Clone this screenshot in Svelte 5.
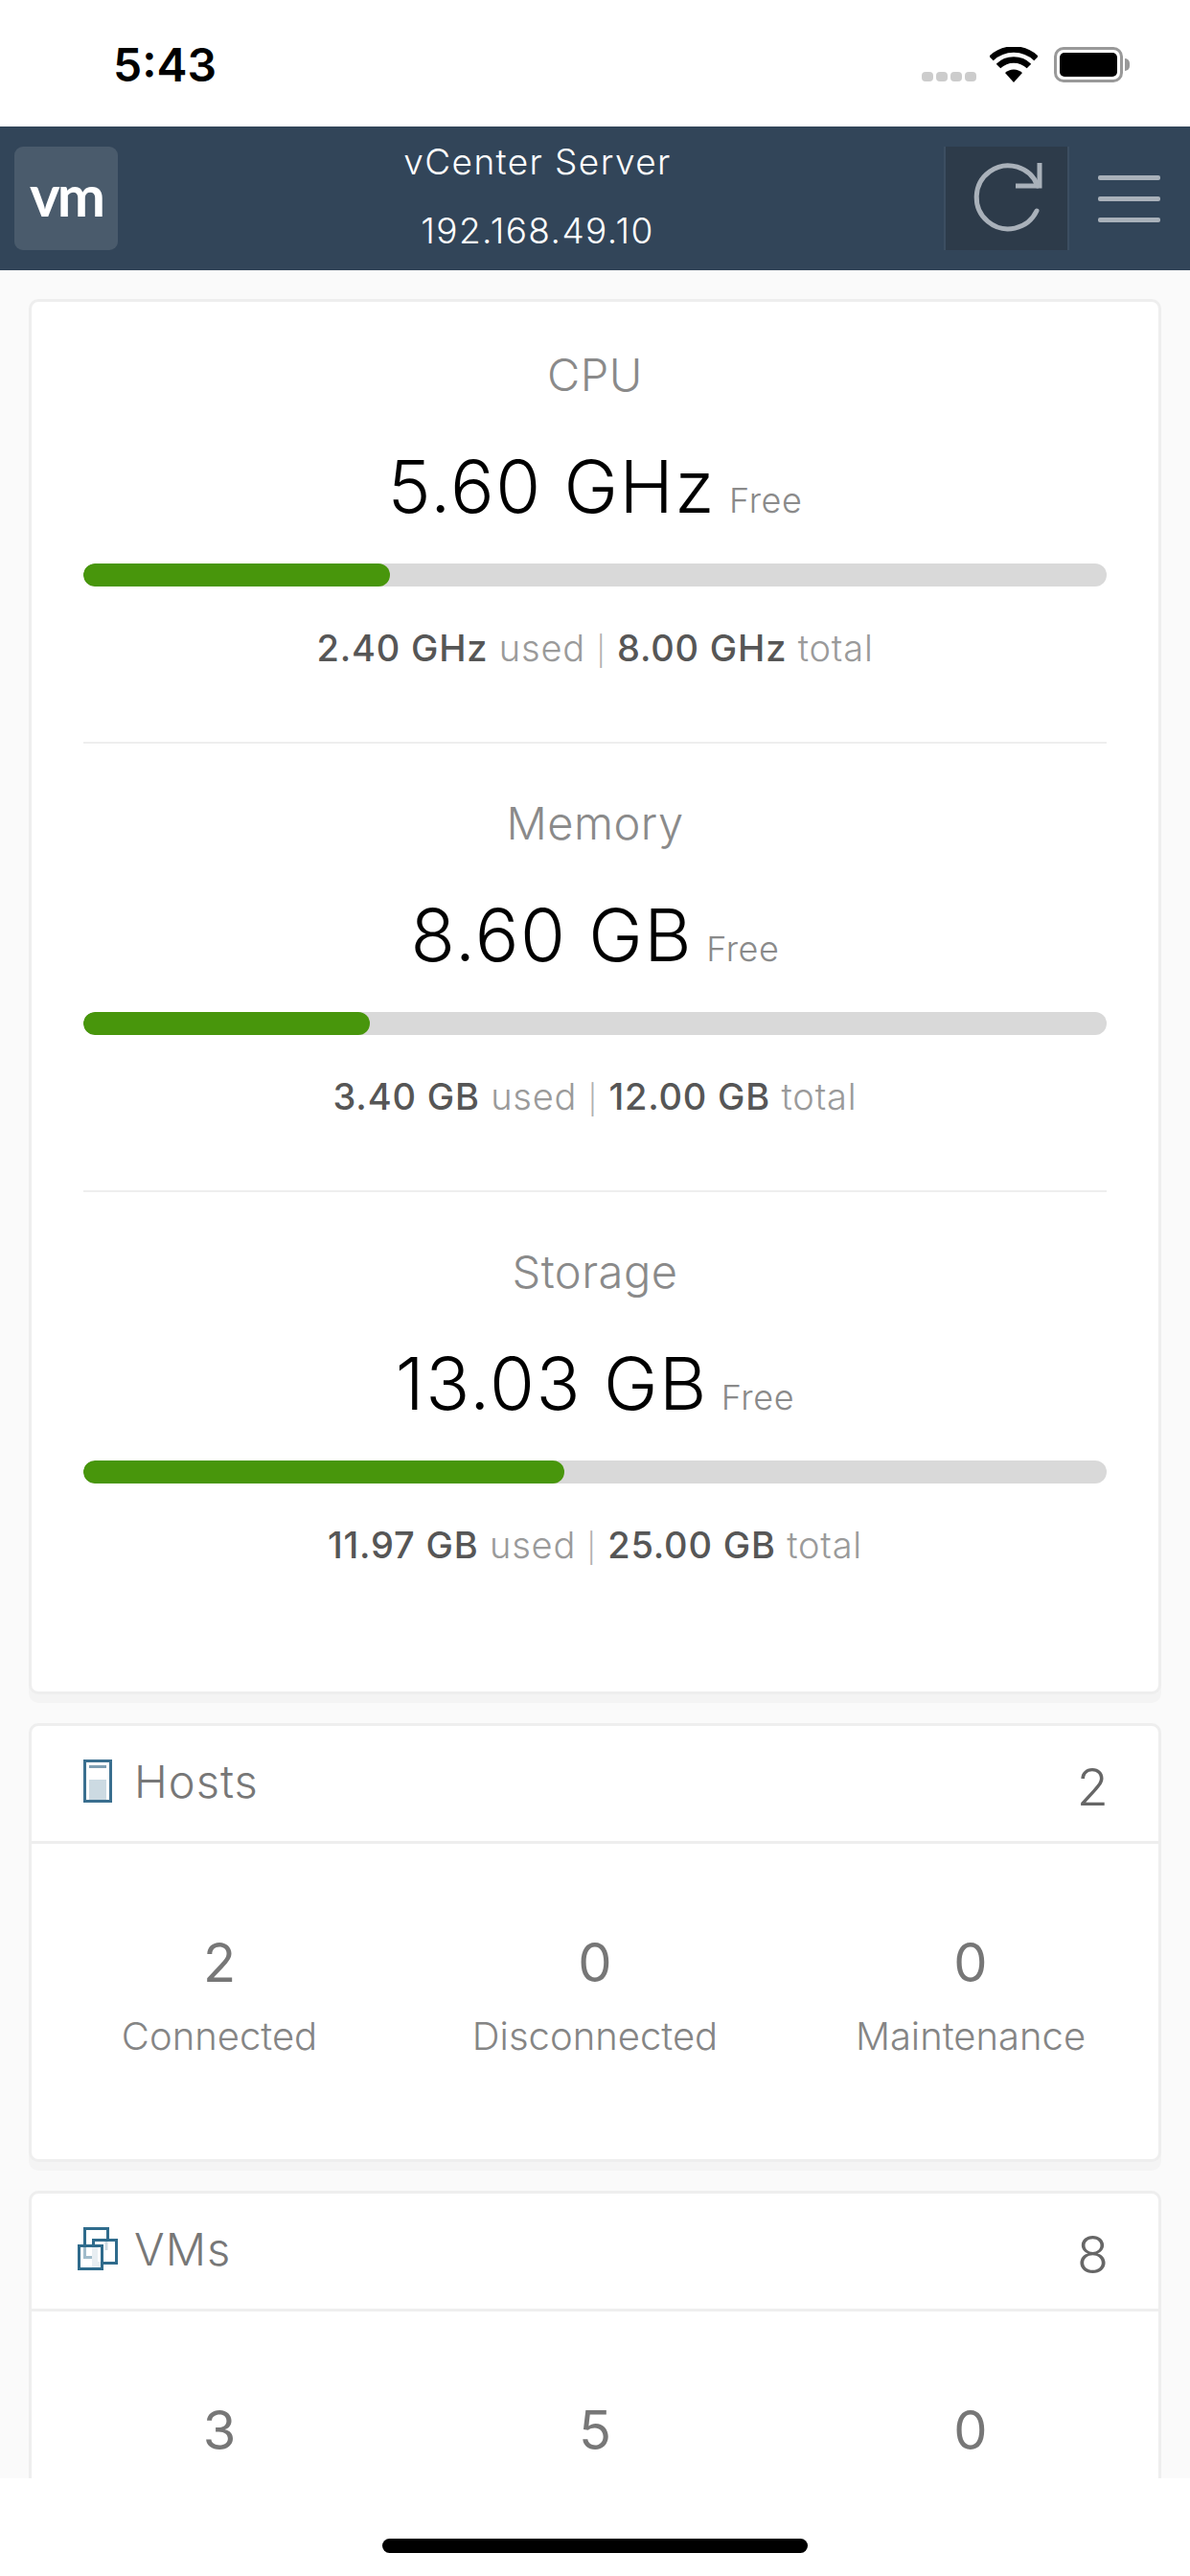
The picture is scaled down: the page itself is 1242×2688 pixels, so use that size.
<script>
    const meters = [
        { name: "CPU", free: "5.60 GHz", used: "2.40 GHz", total: "8.00 GHz", pct: 30 },
        { name: "Memory", free: "8.60 GB", used: "3.40 GB", total: "12.00 GB", pct: 28 },
        { name: "Storage", free: "13.03 GB", used: "11.97 GB", total: "25.00 GB", pct: 47 }
    ];

    const panels = [
        {
            kind: "hosts",
            title: "Hosts",
            count: 2,
            stats: [
                { value: 2, label: "Connected" },
                { value: 0, label: "Disconnected" },
                { value: 0, label: "Maintenance" }
            ]
        },
        {
            kind: "vms",
            title: "VMs",
            count: 8,
            // labels of this row are below the fold
            stats: [{ value: 3 }, { value: 5 }, { value: 0 }]
        }
    ];
</script>

<div class="phone">
    <div class="status">
        <span class="time">5:43</span>
        <div class="status-icons">
            <div class="dots"><i></i><i></i><i></i><i></i></div>
            <svg class="wifi" width="50" height="37" viewBox="0 0 50 37">
                <path d="M25 37 L16 27 A13 13 0 0 1 34 27 Z" fill="#000" />
                <path d="M9 20 A23 23 0 0 1 41 20" fill="none" stroke="#000" stroke-width="6.5" />
                <path d="M1.5 12 A34 34 0 0 1 48.5 12" fill="none" stroke="#000" stroke-width="6.5" />
            </svg>
            <div class="battery"><div class="charge"></div></div>
            <div class="nub"></div>
        </div>
    </div>

    <header class="topbar">
        <div class="logo">vm</div>
        <div class="title">
            <div>vCenter Server</div>
            <div>192.168.49.10</div>
        </div>
        <div class="refresh">
            <svg width="127" height="108" viewBox="0 0 127 108">
                <path d="M95 67 A33 33 0 1 1 96 41" fill="none" stroke="#a9b1ba" stroke-width="5" stroke-linecap="round" />
                <path d="M98 17 V41 H73" fill="none" stroke="#a9b1ba" stroke-width="5" />
            </svg>
        </div>
        <div class="menu"><i></i><i></i><i></i></div>
    </header>

    <main class="content">
        <section class="card usage">
            {#each meters as m}
                <div class="meter">
                    <div class="meter-name">{m.name}</div>
                    <div class="meter-free"><span>{m.free}</span><small>Free</small></div>
                    <div class="track"><div class="fill" style="width: {m.pct}%"></div></div>
                    <div class="meter-stats">
                        <b>{m.used}</b> used <span class="sep">|</span> <b>{m.total}</b> total
                    </div>
                </div>
            {/each}
        </section>

        {#each panels as p}
            <section class="card">
                <div class="card-head">
                    {#if p.kind === "hosts"}
                        <svg class="icon" width="42" height="45" viewBox="0 0 42 45">
                            <rect x="7.5" y="1.5" width="27" height="42" fill="#fff" stroke="#3a6f8f" stroke-width="3" />
                            <rect x="12" y="6" width="18" height="3" fill="#7f9fb3" />
                            <rect x="12" y="21" width="18" height="21" fill="#ccdae2" />
                        </svg>
                    {:else}
                        <svg class="icon" width="42" height="45" viewBox="0 0 42 45">
                            <rect x="7.5" y="1.5" width="24" height="30" fill="#fff" stroke="#2f6b8c" stroke-width="3" />
                            <rect x="16.5" y="13.5" width="24" height="24" fill="#fff" stroke="#2f6b8c" stroke-width="3" />
                            <path d="M30 15 V24" stroke="#ccdae2" stroke-width="3" fill="none" />
                            <path d="M18 21 V39 H24" stroke="#ccdae2" stroke-width="6" fill="none" />
                            <rect x="1.5" y="19.5" width="24" height="24" fill="#fff" fill-opacity="0.55" stroke="#2f6b8c" stroke-width="3" />
                        </svg>
                    {/if}
                    <span class="card-title">{p.title}</span>
                    <span class="card-count">{p.count}</span>
                </div>
                <div class="card-body">
                    {#each p.stats as s}
                        <div class="stat">
                            <div class="stat-value">{s.value}</div>
                            {#if s.label}
                                <div class="stat-label">{s.label}</div>
                            {/if}
                        </div>
                    {/each}
                </div>
            </section>
        {/each}
    </main>

    <div class="home"><div class="home-bar"></div></div>
</div>

<style>
    :global(body) {
        margin: 0;
        background: #fff;
    }

    .phone {
        width: 1242px;
        height: 2688px;
        display: flex;
        flex-direction: column;
        overflow: hidden;
        font-family: Inter, "Liberation Sans", sans-serif;
        font-weight: 300;
    }

    .status {
        height: 132px;
        flex: none;
        background: #fff;
        display: flex;
        justify-content: space-between;
        padding: 44px 63px 0 118px;
        box-sizing: border-box;
    }

    .time {
        font-size: 48px;
        line-height: 48px;
        font-weight: 600;
        color: #000;
    }

    .status-icons {
        display: flex;
        align-items: flex-start;
        height: 40px;
        padding-top: 5px;
    }

    .dots {
        display: flex;
        gap: 3px;
        margin-top: 26px;
        margin-right: 14px;
    }

    .dots i {
        width: 12px;
        height: 10px;
        border-radius: 4px;
        background: #cccccc;
    }

    .battery {
        width: 72px;
        height: 37px;
        margin-left: 17px;
        box-sizing: border-box;
        border: 3px solid #999;
        border-radius: 10px;
        padding: 3px;
    }

    .charge {
        height: 100%;
        background: #000;
        border-radius: 5px;
    }

    .nub {
        width: 5px;
        height: 13px;
        margin: 12px 0 0 2px;
        background: #999;
        border-radius: 0 5px 5px 0;
    }

    .topbar {
        height: 150px;
        flex: none;
        background: #324559;
        display: flex;
        align-items: center;
    }

    .logo {
        width: 108px;
        height: 108px;
        margin-left: 15px;
        flex: none;
        background: #4a5b6c;
        border-radius: 9px;
        color: #fff;
        font-family: Lato, sans-serif;
        font-weight: 700;
        font-size: 60px;
        line-height: 100px;
        letter-spacing: -3px;
        text-align: center;
    }

    .title {
        flex: none;
        width: 862px;
        box-sizing: border-box;
        padding: 0 0 4px 14px;
        color: #fff;
        font-size: 37px;
        line-height: 72px;
        letter-spacing: 1.4px;
        text-align: center;
    }

    .refresh {
        width: 131px;
        height: 108px;
        flex: none;
        background: #2d3b4a;
        box-sizing: border-box;
        border-left: 2px solid #3c4e61;
        border-right: 2px solid #3c4e61;
    }

    .refresh svg {
        display: block;
    }

    .menu {
        width: 65px;
        margin-left: 30px;
        display: flex;
        flex-direction: column;
        gap: 17px;
    }

    .menu i {
        height: 5px;
        border-radius: 2px;
        background: #a9b1ba;
    }

    .content {
        flex: 1;
        min-height: 0;
        overflow: hidden;
        background: #fafafa;
        padding: 30px 30px 0;
    }

    .card {
        background: #fff;
        border: 3px solid #eee;
        border-radius: 10px;
        box-shadow: 0 9px 0 #f4f4f4;
        margin-bottom: 30px;
    }

    .usage {
        padding: 0 54px 55px;
    }

    .meter {
        padding: 53px 0 73px;
        text-align: center;
        border-bottom: 2px solid #eee;
    }

    .meter:first-child {
        padding-top: 46px;
    }

    .meter:last-child {
        border-bottom: none;
    }

    .meter-name {
        font-size: 47px;
        line-height: 60px;
        letter-spacing: 0.5px;
        color: #8a8a8a;
    }

    .meter-free {
        margin-top: 41px;
        height: 90px;
        font-size: 76px;
        line-height: 90px;
        letter-spacing: 1.5px;
        color: #000;
    }

    .meter-free small {
        margin-left: 14px;
        font-size: 36px;
        line-height: 36px;
        letter-spacing: 0.6px;
        color: #8a8a8a;
    }

    .track {
        margin-top: 36px;
        height: 24px;
        border-radius: 12px;
        background: #d9d9d9;
        overflow: hidden;
    }

    .fill {
        height: 100%;
        border-radius: 12px;
        background: #48960c;
    }

    .meter-stats {
        margin-top: 39px;
        height: 50px;
        font-size: 38px;
        line-height: 50px;
        letter-spacing: 0.8px;
        color: #9a9a9a;
    }

    .meter-stats b {
        font-weight: 500;
        color: #565656;
    }

    .sep {
        font-size: 30px;
        color: #b0b0b0;
    }

    .card-head {
        height: 123px;
        box-sizing: border-box;
        padding: 0 52px 6px 48px;
        display: flex;
        align-items: center;
        border-bottom: 3px solid #eee;
    }

    .card-title {
        margin-left: 17px;
        font-size: 47px;
        letter-spacing: 1px;
        color: #777;
    }

    .card-count {
        margin-left: auto;
        padding-top: 12px;
        font-size: 54px;
        color: #666;
    }

    .card-body {
        display: grid;
        grid-template-columns: repeat(3, 1fr);
        padding: 94px 0 103px;
    }

    .stat {
        text-align: center;
    }

    .stat-value {
        font-size: 56px;
        line-height: 60px;
        font-weight: 400;
        color: #777;
    }

    .stat-label {
        margin-top: 22px;
        font-size: 40px;
        line-height: 50px;
        color: #858585;
    }

    .home {
        height: 102px;
        flex: none;
        background: #fff;
        display: flex;
        justify-content: center;
        padding-top: 63px;
        box-sizing: border-box;
    }

    .home-bar {
        width: 444px;
        height: 15px;
        border-radius: 8px;
        background: #000;
    }
</style>
